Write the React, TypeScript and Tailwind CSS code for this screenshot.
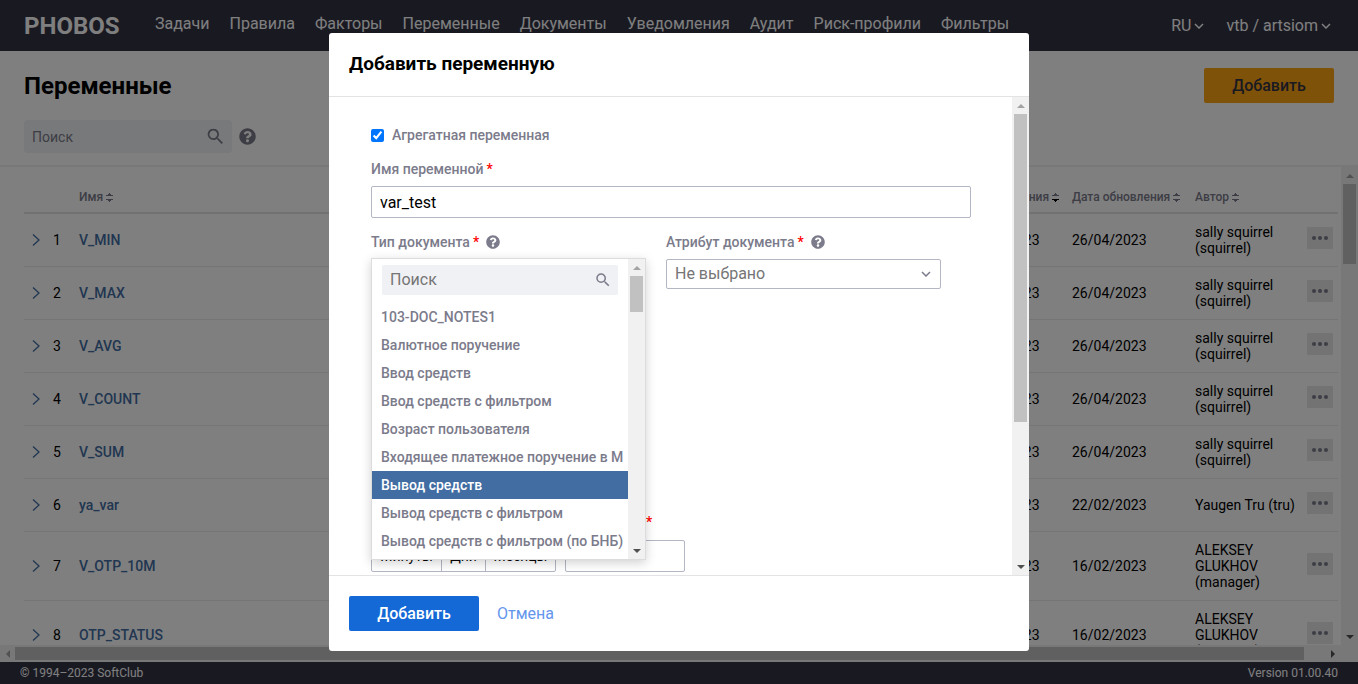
import { MdSearch } from "react-icons/md";
import { FaQuestionCircle } from "react-icons/fa";

const NAV = [
  "Задачи",
  "Правила",
  "Факторы",
  "Переменные",
  "Документы",
  "Уведомления",
  "Аудит",
  "Риск-профили",
  "Фильтры",
];

type Row = { name: string; created: string; updated: string; author: string };

const ROWS: Row[] = [
  { name: "V_MIN", created: "26/04/2023", updated: "26/04/2023", author: "sally squirrel (squirrel)" },
  { name: "V_MAX", created: "26/04/2023", updated: "26/04/2023", author: "sally squirrel (squirrel)" },
  { name: "V_AVG", created: "26/04/2023", updated: "26/04/2023", author: "sally squirrel (squirrel)" },
  { name: "V_COUNT", created: "26/04/2023", updated: "26/04/2023", author: "sally squirrel (squirrel)" },
  { name: "V_SUM", created: "26/04/2023", updated: "26/04/2023", author: "sally squirrel (squirrel)" },
  { name: "ya_var", created: "22/02/2023", updated: "22/02/2023", author: "Yaugen Tru (tru)" },
  { name: "V_OTP_10M", created: "16/02/2023", updated: "16/02/2023", author: "ALEKSEY GLUKHOV (manager)" },
  { name: "OTP_STATUS", created: "16/02/2023", updated: "16/02/2023", author: "ALEKSEY GLUKHOV (manager)" },
];

const OPTIONS = [
  "103-DOC_NOTES1",
  "Валютное поручение",
  "Ввод средств",
  "Ввод средств с фильтром",
  "Возраст пользователя",
  "Входящее платежное поручение в М",
  "Вывод средств",
  "Вывод средств с фильтром",
  "Вывод средств с фильтром (по БНБ)",
];
const SELECTED = "Вывод средств";

function Arrow({ dir, active }: { dir: "up" | "down" | "left" | "right"; active?: boolean }) {
  const points = {
    up: "0,6 4,2 8,6",
    down: "0,2 4,6 8,2",
    left: "6,0 2,4 6,8",
    right: "2,0 6,4 2,8",
  }[dir];
  return (
    <svg viewBox="0 0 8 8" className="size-2" aria-hidden="true">
      <polygon points={points} fill={active ? "#505050" : "#a3a3a3"} />
    </svg>
  );
}

function VerticalScrollbar({ thumb }: { thumb: string }) {
  return (
    <div className="flex w-[17px] shrink-0 flex-col items-center bg-[#f1f1f1]" aria-hidden="true">
      <div className="flex h-[17px] shrink-0 items-center"><Arrow dir="up" /></div>
      <div className="min-h-0 w-[13px] grow">
        <div className={`w-full bg-[#c1c1c1] ${thumb}`} />
      </div>
      <div className="flex h-[17px] shrink-0 items-center"><Arrow dir="down" active /></div>
    </div>
  );
}

function Caret({ className }: { className: string }) {
  return (
    <svg viewBox="0 0 10 6" className={className} fill="none" stroke="currentColor" aria-hidden="true">
      <path d="M1 1l4 4 4-4" strokeWidth="1.5" />
    </svg>
  );
}

function Sort({ desc }: { desc?: boolean }) {
  return (
    <svg viewBox="0 0 7 9" className="ml-[3px] inline-block h-[9px] w-[7px]" fill="currentColor" aria-hidden="true">
      <path d="M3 0h1v1h1v1h2v1H0V2h2V1h1z" />
      <path d="M0 6h7v1H5v1H4v1H3V8H2V7H0z" className={desc ? "text-black" : ""} />
    </svg>
  );
}

function Label({ text, htmlFor, help }: { text: string; htmlFor: string; help?: boolean }) {
  return (
    <div className="flex h-5 items-center text-sm font-medium text-[#7b7b8b]">
      <label htmlFor={htmlFor}>
        {text}
        <span className="ml-[3px] text-[#f00]">*</span>
      </label>
      {help && <FaQuestionCircle className="ml-[7px] size-3.5" />}
    </div>
  );
}

export default function App() {
  return (
    <div className="relative flex h-screen flex-col overflow-hidden bg-white font-['Roboto',sans-serif] text-black">
      <header className="flex h-[51px] shrink-0 items-center bg-[#323244] px-6 text-white">
        <a href="#" className="w-[131px] text-2xl font-bold">PHOBOS</a>
        <nav className="flex gap-5 pb-1 text-base">
          {NAV.map((item) => (
            <a key={item} href="#" className="whitespace-nowrap">{item}</a>
          ))}
        </nav>
        <div className="ml-auto flex gap-[22px] pr-[3px] text-base">
          <button className="flex items-center gap-[3px]">RU <Caret className="h-1.5 w-2.5" /></button>
          <button className="flex items-center gap-[3px]">vtb / artsiom <Caret className="h-1.5 w-2.5" /></button>
        </div>
      </header>

      <section className="flex h-[116px] shrink-0 items-start justify-between px-6 pt-[17px] shadow-[inset_0_-2px_1px_#f0f0f0]">
        <div>
          <h1 className="text-2xl leading-9 font-bold">Переменные</h1>
          <div className="mt-4 flex items-center gap-[7px] text-[#7b7b8b]">
            <div className="flex h-[33px] w-[208px] items-center rounded-sm bg-[#f1f3f5] pr-1.5 pl-2">
              <input
                aria-label="Поиск переменных"
                placeholder="Поиск"
                className="min-w-0 grow bg-transparent text-sm outline-none placeholder:text-[#7b7b8b]"
              />
              <MdSearch className="size-[21px] shrink-0" />
            </div>
            <FaQuestionCircle className="size-[17px]" />
          </div>
        </div>
        <button className="h-[35px] w-[130px] rounded-xs bg-[#ffa412] text-base font-medium text-[#333345]">Добавить</button>
      </section>

      <div className="flex min-h-0 grow">
        <div className="min-w-0 grow overflow-hidden pr-[3px] pl-6">
          <table className="w-full table-fixed text-sm">
            <colgroup>
              <col className="w-[29px]" />
              <col className="w-[26px]" />
              <col />
              <col className="w-[107px]" />
              <col className="w-[123px]" />
              <col className="w-[112px]" />
              <col className="w-[31px]" />
            </colgroup>
            <thead>
              <tr className="h-[46px] border-b-2 border-[#e3e3e3] text-left text-xs text-[#7b7b8b]">
                <th />
                <th />
                <th className="pt-3.5 font-medium">Имя<Sort /></th>
                <th className="pt-3.5 font-medium whitespace-nowrap">Дата создания<Sort desc /></th>
                <th className="pt-3.5 font-medium whitespace-nowrap">Дата обновления<Sort /></th>
                <th className="pt-3.5 font-medium">Автор<Sort /></th>
                <th />
              </tr>
            </thead>
            <tbody>
              {ROWS.map((row, i) => (
                <tr key={row.name} className="h-[53px] border-b border-[#ebebeb]">
                  <td className="pl-2">
                    <button aria-label="Развернуть" className="block text-[#426da2]">
                      <svg viewBox="0 0 8 12" className="h-3 w-2" fill="none" stroke="currentColor" strokeWidth="1.3">
                        <path d="M1 .5L7 6l-6 5.5" />
                      </svg>
                    </button>
                  </td>
                  <td>{i + 1}</td>
                  <td><a href="#" className="font-medium text-[#426da2]">{row.name}</a></td>
                  <td>{row.created}</td>
                  <td>{row.updated}</td>
                  <td className="py-2.5 leading-4">{row.author}</td>
                  <td className="pb-1">
                    <button aria-label="Действия" className="flex h-[22px] w-[26px] items-center justify-center gap-[2px] rounded-[1px] bg-[#e6e6e6]">
                      <span className="size-1 rounded-full bg-[#7b7b8b]" />
                      <span className="size-1 rounded-full bg-[#7b7b8b]" />
                      <span className="size-1 rounded-full bg-[#7b7b8b]" />
                    </button>
                  </td>
                </tr>
              ))}
            </tbody>
          </table>
        </div>
        <VerticalScrollbar thumb="h-20" />
      </div>
      <div className="flex h-[17px] shrink-0 bg-[#f1f1f1] pr-[17px]" aria-hidden="true">
        <div className="flex w-[15px] items-center justify-center"><Arrow dir="left" /></div>
        <div className="flex grow items-center"><div className="h-[13px] w-[98.5%] bg-[#c1c1c1]" /></div>
        <div className="flex w-[17px] items-center justify-center"><Arrow dir="right" active /></div>
      </div>

      <footer className="flex h-[22px] shrink-0 items-center justify-between bg-[#323244] px-5 text-xs text-white">
        <span>© 1994–2023 SoftClub</span>
        <span>Version 01.00.40</span>
      </footer>

      <div className="absolute inset-0 flex justify-center bg-black/50 py-[33px]">
        <div role="dialog" aria-modal="true" aria-labelledby="dialog-title" className="flex w-[700px] max-w-full flex-col overflow-hidden rounded-[3px] bg-white">
          <div className="flex h-16 shrink-0 items-center border-b border-[#e3e3e6] px-5">
            <h2 id="dialog-title" className="text-[19px] font-bold">Добавить переменную</h2>
          </div>

          <div className="flex min-h-0 grow">
            <div className="min-w-0 grow overflow-hidden pt-7 pr-[41px] pl-[42px]">
              <label className="flex h-5 items-center gap-2 text-sm font-medium text-[#7b7b8b]">
                <input type="checkbox" defaultChecked className="size-[13px] accent-[#0075ff]" />
                Агрегатная переменная
              </label>

              <div className="mt-3.5">
                <Label text="Имя переменной" htmlFor="var-name" />
                <input id="var-name" defaultValue="var_test" className="mt-[7px] h-8 w-full rounded-xs border border-[#b3b6c3] px-2 text-base outline-none" />
              </div>

              <div className="mt-3.5 flex gap-5">
                <div className="relative w-[275px]">
                  <Label text="Тип документа" htmlFor="doc-search" help />
                  <div className="mt-[7px] h-[30px] rounded-xs border border-[#b3b6c3]" />
                  <div className="absolute top-[26px] left-0 flex h-[302px] w-full border border-[#dcdcdc] bg-white shadow-[0_3px_10px_rgba(0,0,0,0.18)]">
                    <div className="min-w-0 grow overflow-hidden">
                      <div className="mx-2.5 mt-1.5 mb-2 flex h-[30px] items-center rounded-xs bg-[#f0f1f4] pr-1.5 pl-2">
                        <input
                          id="doc-search"
                          placeholder="Поиск"
                          className="min-w-0 grow bg-transparent text-base outline-none placeholder:text-[#757575]"
                        />
                        <MdSearch className="size-[18px] shrink-0 text-[#7b7b8b]" />
                      </div>
                      <div role="listbox" aria-label="Тип документа">
                        {OPTIONS.map((option) => (
                          <button
                            key={option}
                            role="option"
                            aria-selected={option === SELECTED}
                            className={
                              option === SELECTED
                                ? "block h-7 w-full bg-[#426da2] px-[9px] text-left text-sm font-medium whitespace-nowrap text-white"
                                : "block h-7 w-full px-[9px] text-left text-sm font-medium whitespace-nowrap text-[#7b7b8b]"
                            }
                          >
                            {option}
                          </button>
                        ))}
                      </div>
                    </div>
                    <VerticalScrollbar thumb="h-9" />
                  </div>
                </div>

                <div className="w-[275px]">
                  <Label text="Атрибут документа" htmlFor="doc-attr" help />
                  <div className="mt-[7px] grid items-center">
                    <select id="doc-attr" className="col-start-1 row-start-1 h-[30px] w-full appearance-none rounded-xs border border-[#b3b6c3] bg-white px-2 text-base text-[#757575]">
                      <option>Не выбрано</option>
                    </select>
                    <Caret className="pointer-events-none col-start-1 row-start-1 mr-2.5 h-1.5 w-2.5 justify-self-end text-[#7b7b8b]" />
                  </div>
                </div>
              </div>

              <div className="mt-[223px] flex gap-[9px]">
                <fieldset>
                  <legend className="h-5 text-sm font-medium text-[#7b7b8b]">Период</legend>
                  <div className="mt-2 flex h-8 divide-x divide-[#b3b6c3] rounded-xs border border-[#b3b6c3] text-sm">
                    <button className="w-[70px]">Минуты</button>
                    <button className="w-11">Дни</button>
                    <button className="w-[69px]">Месяцы</button>
                  </div>
                </fieldset>
                <div>
                  <Label text="Количество" htmlFor="amount" />
                  <input id="amount" className="mt-2 h-8 w-[120px] rounded-xs border border-[#b3b6c3] px-2 text-base" />
                </div>
              </div>
            </div>
            <VerticalScrollbar thumb="h-[308px]" />
          </div>

          <div className="flex h-[76px] shrink-0 items-center gap-[18px] border-t border-[#e3e3e6] px-5">
            <button className="h-[35px] w-[130px] rounded-xs bg-[#1469d6] text-base font-medium text-white">Добавить</button>
            <button className="text-base text-[#6495ed]">Отмена</button>
          </div>
        </div>
      </div>
    </div>
  );
}
